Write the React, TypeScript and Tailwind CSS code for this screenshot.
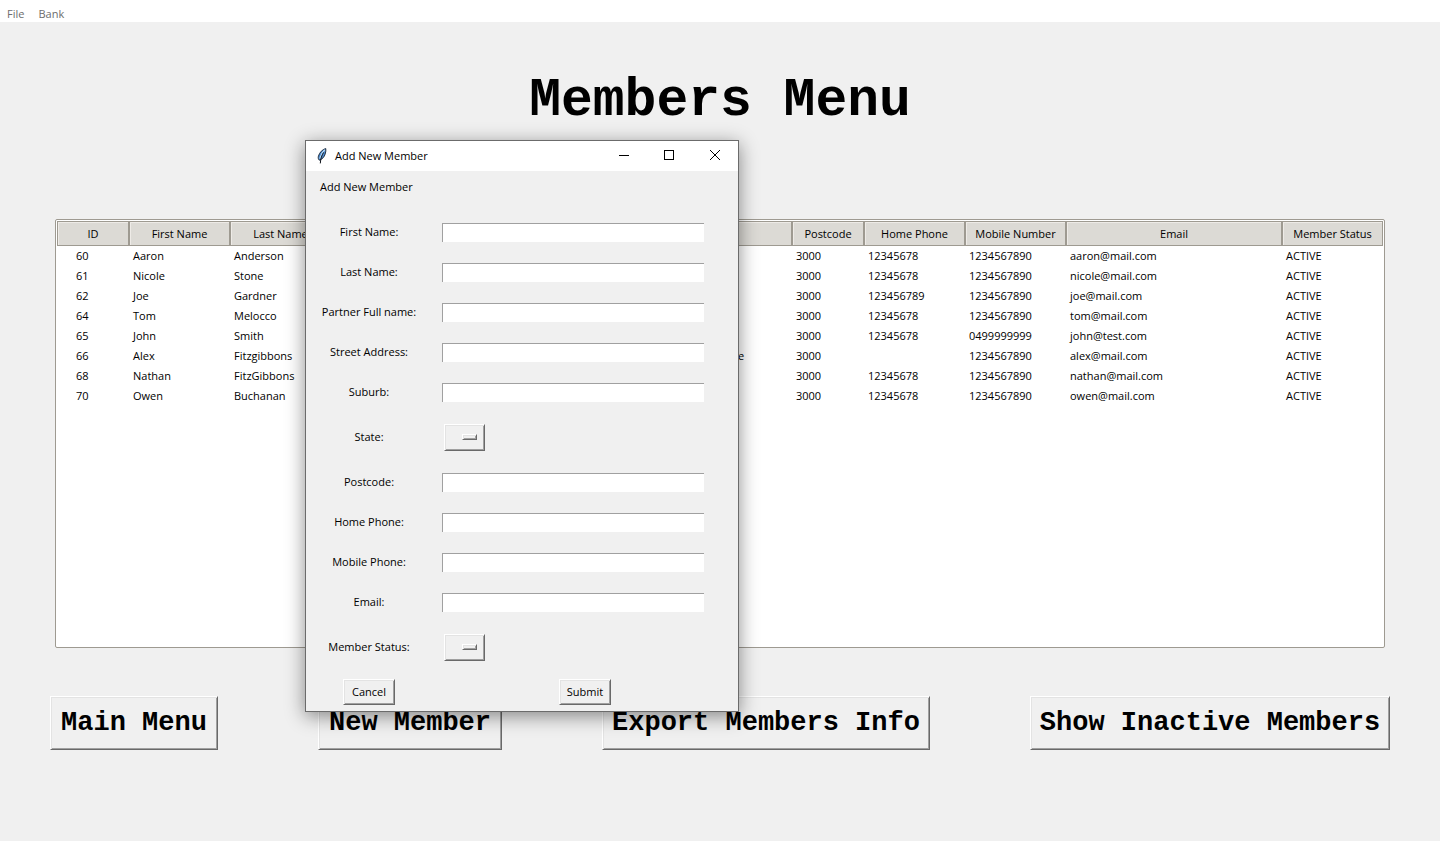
import React from "react";

type Member = {
  id: string;
  first: string;
  last: string;
  suburb?: string;
  home: string;
  mobile: string;
  email: string;
};

const members: Member[] = [
  { id: "60", first: "Aaron", last: "Anderson", home: "12345678", mobile: "1234567890", email: "aaron@mail.com" },
  { id: "61", first: "Nicole", last: "Stone", home: "12345678", mobile: "1234567890", email: "nicole@mail.com" },
  { id: "62", first: "Joe", last: "Gardner", home: "123456789", mobile: "1234567890", email: "joe@mail.com" },
  { id: "64", first: "Tom", last: "Melocco", home: "12345678", mobile: "1234567890", email: "tom@mail.com" },
  { id: "65", first: "John", last: "Smith", home: "12345678", mobile: "0499999999", email: "john@test.com" },
  { id: "66", first: "Alex", last: "Fitzgibbons", suburb: "Melbourne House", home: "", mobile: "1234567890", email: "alex@mail.com" },
  { id: "68", first: "Nathan", last: "FitzGibbons", home: "12345678", mobile: "1234567890", email: "nathan@mail.com" },
  { id: "70", first: "Owen", last: "Buchanan", home: "12345678", mobile: "1234567890", email: "owen@mail.com" },
];

const columns = [
  { name: "ID", title: "ID", width: "w-[72px]" },
  { name: "First Name", title: "First Name", width: "w-[101px]" },
  { name: "Last Name", title: "Last Name", width: "w-[101px]" },
  { name: "Partner", title: "", width: "w-[101px]" },
  { name: "Street Address", title: "", width: "w-[216px]" },
  { name: "Suburb", title: "Suburb", width: "w-[144px]" },
  { name: "Postcode", title: "Postcode", width: "w-[72px]" },
  { name: "Home Phone", title: "Home Phone", width: "w-[101px]" },
  { name: "Mobile Number", title: "Mobile Number", width: "w-[101px]" },
  { name: "Email", title: "Email", width: "w-[216px]" },
  { name: "Member Status", title: "Member Status", width: "w-[101px]" },
];

const raised =
  "bg-[#f0f0f0] border border-t-white border-l-white border-b-[#696969] border-r-[#696969] shadow-[inset_1px_1px_0_#e3e3e3,inset_-1px_-1px_0_#a0a0a0]";

function MenuButton({ label, width }: { label: string; width: string }) {
  return (
    <button
      type="button"
      className={`${raised} ${width} h-[54px] shrink-0 whitespace-nowrap text-center font-['Liberation_Mono',monospace] text-[27px] leading-8 font-bold`}
    >
      {label}
    </button>
  );
}

function EntryRow({ id, label }: { id: string; label: string }) {
  return (
    <div className="flex h-10 items-center">
      <label htmlFor={id} className="w-[126px] text-center">
        {label}
      </label>
      <input
        id={id}
        type="text"
        className="ml-2.5 h-[19px] w-[262px] border-t border-l border-[#a0a0a0] bg-white px-0.5 outline-none"
      />
    </div>
  );
}

function OptionRow({ id, label, options }: { id: string; label: string; options: string[] }) {
  return (
    <div className="flex h-[50px] items-center">
      <label htmlFor={id} className="w-[126px] text-center">
        {label}
      </label>
      <div className="relative ml-3">
        <select id={id} defaultValue="" className={`${raised} block h-[27px] w-[41px] appearance-none text-transparent`}>
          <option value="" />
          {options.map((o) => (
            <option key={o} value={o} className="text-black">
              {o}
            </option>
          ))}
        </select>
        <span className={`${raised} pointer-events-none absolute top-2.5 right-2 h-1.5 w-[15px]`} />
      </div>
    </div>
  );
}

function Feather() {
  return (
    <svg viewBox="0 0 16 16" className="size-4" aria-hidden="true">
      <path d="M11.8 0.6 C8.6 1.2 5.4 4.6 4.4 8.2 C4 9.8 4.2 11 5.2 12.2 C8.4 11.4 10.3 8.8 11.2 6 C11.8 4 12.1 2.2 11.8 0.6Z" fill="#4b8ad0" stroke="#1b2430" strokeWidth="0.9" />
      <path d="M10.8 1.8 C8.3 4.2 6.6 7 5.8 10.6" fill="none" stroke="#b9dcf7" strokeWidth="1.2" />
      <path d="M9.6 4.4 C7.8 7.2 6.6 10.5 6.3 15.4" fill="none" stroke="#10151c" strokeWidth="1" />
    </svg>
  );
}

function AddMemberDialog() {
  return (
    <section
      role="dialog"
      aria-label="Add New Member"
      className="absolute top-[140px] left-[305px] w-[434px] border border-[#6b6b6b] bg-[#f0f0f0] shadow-[0_4px_18px_rgba(0,0,0,0.45)]"
    >
      <header className="flex h-[30px] items-center bg-white pl-2">
        <Feather />
        <h2 className="ml-[5px] flex-1">Add New Member</h2>
        <button type="button" aria-label="Minimize" className="flex h-full w-[45px] items-center justify-center">
          <svg viewBox="0 0 10 10" className="size-2.5" shapeRendering="crispEdges">
            <path d="M0 4.5H10" stroke="#000" fill="none" />
          </svg>
        </button>
        <button type="button" aria-label="Maximize" className="flex h-full w-[46px] items-center justify-center pb-0.5">
          <svg viewBox="0 0 10 10" className="size-2.5" shapeRendering="crispEdges">
            <path d="M0.5 0.5H9.5V9.5H0.5Z" stroke="#000" fill="none" />
          </svg>
        </button>
        <button type="button" aria-label="Close" className="flex h-full w-[46px] items-center justify-center pb-0.5">
          <svg viewBox="0 0 10 10" className="size-2.5">
            <path d="M0 0L10 10M10 0L0 10" stroke="#000" fill="none" />
          </svg>
        </button>
      </header>
      <form onSubmit={(e) => e.preventDefault()}>
        <p className="h-[41px] pt-2 pl-3.5">Add New Member</p>
        <EntryRow id="first-name" label="First Name:" />
        <EntryRow id="last-name" label="Last Name:" />
        <EntryRow id="partner-name" label="Partner Full name:" />
        <EntryRow id="street" label="Street Address:" />
        <EntryRow id="suburb" label="Suburb:" />
        <OptionRow id="state" label="State:" options={["ACT", "NSW", "NT", "QLD", "SA", "TAS", "VIC", "WA"]} />
        <EntryRow id="postcode" label="Postcode:" />
        <EntryRow id="home-phone" label="Home Phone:" />
        <EntryRow id="mobile-phone" label="Mobile Phone:" />
        <EntryRow id="email" label="Email:" />
        <OptionRow id="status" label="Member Status:" options={["ACTIVE", "INACTIVE"]} />
        <div className="flex h-[39px] items-center">
          <div className="flex w-[126px] justify-center">
            <button type="button" className={`${raised} h-[26px] w-[52px]`}>
              Cancel
            </button>
          </div>
          <div className="flex flex-1 justify-center">
            <button type="submit" className={`${raised} h-[26px] w-[52px]`}>
              Submit
            </button>
          </div>
        </div>
      </form>
    </section>
  );
}

export default function App() {
  return (
    <div className="relative min-h-screen bg-[#f0f0f0] font-['Open_Sans','Noto_Sans',sans-serif] text-[11px] leading-4 text-black">
      <nav className="flex h-[22px] items-end gap-3.5 bg-white pl-[7px] text-[#6d6d6d]">
        <button type="button">File</button>
        <button type="button">Bank</button>
      </nav>

      <main>
        <h1 className="h-[197px] pt-12 text-center font-['Liberation_Mono',monospace] text-[53px] leading-[62px] font-bold">
          Members Menu
        </h1>

        <div className="mx-[55px] min-h-[429px] rounded-[2px] border border-[#9e9a91] bg-white p-px">
          <table className="w-full table-fixed border-separate border-spacing-0">
            <thead>
              <tr className="h-[25px]">
                {columns.map((c) => (
                  <th
                    key={c.name}
                    aria-label={c.name}
                    className={`${c.width} overflow-hidden border border-[#9e9a91] bg-[#dcdad5] p-0 font-normal whitespace-nowrap shadow-[inset_1px_1px_0_#eeebe7]`}
                  >
                    {c.title}
                  </th>
                ))}
              </tr>
            </thead>
            <tbody>
              {members.map((m) => (
                <tr key={m.id} className="h-5 [&>td]:p-0 [&>td]:pl-1 [&>td]:whitespace-nowrap">
                  <td>
                    <span className="pl-[15px]">{m.id}</span>
                  </td>
                  <td>{m.first}</td>
                  <td>{m.last}</td>
                  <td />
                  <td />
                  <td>{m.suburb}</td>
                  <td>3000</td>
                  <td>{m.home}</td>
                  <td>{m.mobile}</td>
                  <td>{m.email}</td>
                  <td>ACTIVE</td>
                </tr>
              ))}
            </tbody>
          </table>
        </div>

        <div className="mt-12 flex justify-between px-[50px]">
          <MenuButton label="Main Menu" width="w-[168px]" />
          <MenuButton label="New Member" width="w-[184px]" />
          <MenuButton label="Export Members Info" width="w-[328px]" />
          <MenuButton label="Show Inactive Members" width="w-[360px]" />
        </div>
      </main>

      <AddMemberDialog />
    </div>
  );
}
